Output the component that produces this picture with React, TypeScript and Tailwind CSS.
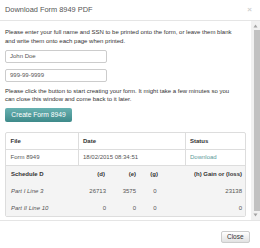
import { FC } from 'react';

const rows = [
  { label: 'Part I Line 3', d: '26713', e: '3575', g: '0', h: '23138' },
  { label: 'Part II Line 10', d: '0', e: '0', g: '0', h: '0' },
];

const grid = 'grid grid-cols-[63px_32px_30px_22px_84px] items-center h-[16.6px] pl-[5px]';

const App: FC = () => {
  return (
    <div className="w-[260px] h-[248px] bg-white flex flex-col overflow-hidden font-['Liberation_Sans',Arial,sans-serif] text-[#333]">
      {/* header */}
      <div className="h-[21px] shrink-0 border-b border-[#e5e5e5] flex items-center justify-between pl-[5px] pr-[8px]">
        <span className="text-[7.4px] text-[#555] leading-none">Download Form 8949 PDF</span>
        <span className="text-[8px] font-bold text-[#d0d0d0] leading-none">×</span>
      </div>

      {/* body */}
      <div className="flex-1 min-h-0 flex">
        <div className="w-[251px] px-[5px] pt-[7px] overflow-hidden text-[6px] leading-[8.5px]">
          <p className="whitespace-nowrap">
            Please enter your full name and SSN to be printed onto the form, or leave them blank
            <br />
            and write them onto each page when printed.
          </p>
          <div className="mt-[5px] w-[102px] h-[13.3px] border border-[#ccc] rounded-[2px] flex items-center pl-[4px] text-[#555]">
            John Doe
          </div>
          <div className="mt-[5.4px] w-[102px] h-[13.3px] border border-[#ccc] rounded-[2px] flex items-center pl-[4px] text-[#555]">
            999-99-9999
          </div>
          <p className="mt-[4.8px] whitespace-nowrap">
            Please click the button to start creating your form. It might take a few minutes so you
            <br />
            can close this window and come back to it later.
          </p>
          <button className="mt-[4.4px] w-[67px] h-[14px] rounded-[2px] bg-gradient-to-b from-[#68b1b1] to-[#3e8a8a] text-white text-[6.7px] leading-none flex items-center justify-center">
            Create Form 8949
          </button>

          {/* table */}
          <div className="mt-[10px] border border-[#ddd] rounded-[2px] overflow-hidden">
            <div className="flex h-[16.6px] border-b border-[#ddd] font-bold items-stretch">
              <div className="w-[73px] pl-[4.5px] flex items-center border-r border-[#ddd]">File</div>
              <div className="w-[107px] pl-[4px] flex items-center border-r border-[#ddd]">Date</div>
              <div className="flex-1 pl-[4px] flex items-center">Status</div>
            </div>
            <div className="flex h-[16.6px] border-b border-[#ddd] items-stretch text-[#555]">
              <div className="w-[73px] pl-[4.5px] flex items-center border-r border-[#ddd]">Form 8949</div>
              <div className="w-[107px] pl-[4px] flex items-center border-r border-[#ddd]">18/02/2015 08:34:51</div>
              <div className="flex-1 pl-[4px] flex items-center text-[#5b9a9b]">Download</div>
            </div>
            <div className="bg-[#f4f4f4]">
              <div className={`${grid} font-bold`}>
                <div>Schedule D</div>
                <div className="text-right pr-[1px]">(d)</div>
                <div className="text-right">(e)</div>
                <div className="text-right">(g)</div>
                <div className="text-right">(h) Gain or (loss)</div>
              </div>
              {rows.map((r) => (
                <div key={r.label} className={`${grid} text-[#555]`}>
                  <div className="italic">{r.label}</div>
                  <div className="text-right">{r.d}</div>
                  <div className="text-right">{r.e}</div>
                  <div className="text-right pr-[1.5px]">{r.g}</div>
                  <div className="text-right">{r.h}</div>
                </div>
              ))}
            </div>
          </div>
        </div>

        {/* scrollbar */}
        <div className="w-[9px] bg-[#f1f1f1] flex flex-col items-center">
          <svg width="5" height="4" viewBox="0 0 5 4" className="mt-[3px]">
            <path d="M2.5 0.5L4.5 3.5H0.5Z" fill="#a3a3a3" />
          </svg>
          <div className="mt-[2px] mb-[2px] flex-1 w-[6px] ml-[2px] bg-[#c1c1c1]" />
          <svg width="5" height="4" viewBox="0 0 5 4" className="mb-[3px]">
            <path d="M0.5 0.5H4.5L2.5 3.5Z" fill="#a3a3a3" />
          </svg>
        </div>
      </div>

      {/* footer */}
      <div className="h-[28px] shrink-0 border-t border-[#e5e5e5] flex items-start justify-end pt-[10px] pr-[10.5px]">
        <button className="w-[28.5px] h-[11.5px] border border-[#ccc] rounded-[2px] bg-gradient-to-b from-white to-[#e2e2e2] text-[6.5px] leading-none text-[#333] flex items-center justify-center">
          Close
        </button>
      </div>
    </div>
  );
};

export default App;
